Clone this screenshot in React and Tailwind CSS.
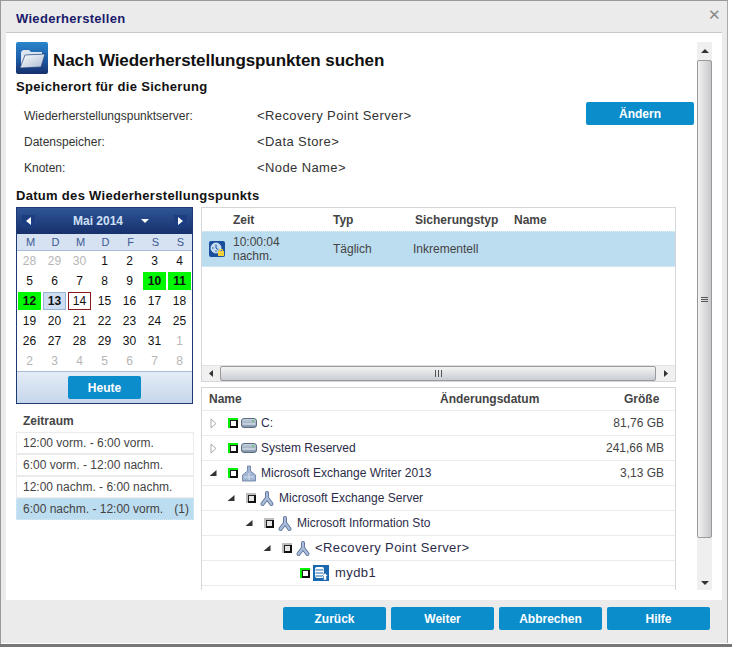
import React from 'react';

const DAYS = [
  [28, 29, 30, 1, 2, 3, 4],
  [5, 6, 7, 8, 9, 10, 11],
  [12, 13, 14, 15, 16, 17, 18],
  [19, 20, 21, 22, 23, 24, 25],
  [26, 27, 28, 29, 30, 31, 1],
  [2, 3, 4, 5, 6, 7, 8],
];

const FolderIcon = () => (
  <svg width="32" height="32" viewBox="0 0 32 32" className="shrink-0">
    <defs>
      <linearGradient id="folderBg" x1="0" y1="0" x2="0" y2="1">
        <stop offset="0" stopColor="#2a86cc" />
        <stop offset="0.55" stopColor="#1c5aa5" />
        <stop offset="1" stopColor="#162f6c" />
      </linearGradient>
      <linearGradient id="folderFront" x1="0" y1="0" x2="1" y2="1">
        <stop offset="0" stopColor="#ffffff" />
        <stop offset="1" stopColor="#a9bbd2" />
      </linearGradient>
    </defs>
    <rect width="32" height="32" rx="2" fill="url(#folderBg)" />
    <path d="M5 25 L5 10 L7 8 L13 8 L15 10 L26 10 L26 12 L9 13 Z" fill="#dbe6f2" />
    <path d="M4 26 L9 13 L29 12 L25 25 Z" fill="url(#folderFront)" stroke="#17336f" strokeWidth="0.6" />
  </svg>
);

const ClockLockIcon = () => (
  <svg width="16" height="16" viewBox="0 0 16 16" className="shrink-0">
    <rect width="16" height="16" rx="2" fill="#1a4f9c" />
    <circle cx="7" cy="7" r="5" fill="#bfd9f0" stroke="#e8f2fb" strokeWidth="0.8" />
    <path d="M7 3.5 V7 L9.5 9 M3 7 H4.5 M7 11 V9.5" stroke="#1a4f9c" fill="none" />
    <rect x="9" y="10" width="6" height="5" fill="#f2d13c" />
    <path d="M10.5 10 V8.5 H13.5 V10" stroke="#f2d13c" fill="none" />
  </svg>
);

const DriveIcon = () => (
  <svg width="16" height="10" viewBox="0 0 16 10" className="shrink-0">
    <defs>
      <linearGradient id="driveBody" x1="0" y1="0" x2="0" y2="1">
        <stop offset="0" stopColor="#c8d4e0" />
        <stop offset="1" stopColor="#7f93aa" />
      </linearGradient>
    </defs>
    <rect x="0.5" y="0.5" width="15" height="9" rx="2.5" fill="url(#driveBody)" stroke="#5d6d80" />
    <path d="M1.5 6 H14.5" stroke="#eef3f8" />
    <rect x="11" y="2.5" width="2" height="1" fill="#35c435" />
  </svg>
);

const NodeIcon = () => (
  <svg width="16" height="17" viewBox="0 0 16 17" className="shrink-0">
    <path d="M8 3 V8 L3.5 14 M8 8 L12.5 14" fill="none" stroke="#5f7399" strokeWidth="4" strokeLinecap="round" strokeLinejoin="round" />
    <path d="M8 3 V8 L3.5 14 M8 8 L12.5 14" fill="none" stroke="#a9bddb" strokeWidth="2.2" strokeLinecap="round" strokeLinejoin="round" />
  </svg>
);

const WriterIcon = () => (
  <svg width="16" height="17" viewBox="0 0 16 17" className="shrink-0">
    <path d="M6.5 1 H9.5 V6 L14.5 10 V16 H1.5 V10 L6.5 6 Z" fill="#a3b7d4" stroke="#62779e" strokeWidth="0.8" strokeLinejoin="round" />
    <path d="M3 12 H13 M8 8 V15" stroke="#dfe7f2" strokeWidth="0.8" />
  </svg>
);

const DbIcon = () => (
  <svg width="16" height="16" viewBox="0 0 16 16" className="shrink-0 mr-[2px]">
    <rect width="16" height="16" fill="#1a68b0" />
    <rect x="2" y="2" width="9" height="11" rx="2" fill="#fff" />
    <path d="M2.5 5 H10.5 M2.5 8 H10.5 M2.5 11 H9" stroke="#1a68b0" />
    <path d="M9 11 L12 8 L15 11 H13.5 V15 H10.5 V11 Z" fill="#fff" stroke="#1a68b0" strokeWidth="0.5" />
  </svg>
);

const Check = ({ on }) => (
  <svg width="10" height="10" viewBox="0 0 10 10" className="shrink-0">
    <rect width="10" height="10" fill={on ? '#00f000' : '#bdbdbd'} />
    <path d="M8 2 H10 V10 H2 V8 H8 Z" fill="#111" />
    <path d="M2 2 H8 V3 H3 V8 H2 Z" fill="#222" />
    <rect x="3" y="3" width="5" height="5" fill={on ? '#fff' : '#e6e6e6'} />
  </svg>
);

const Arrow = ({ open }) =>
  open ? (
    <svg width="8" height="8" viewBox="0 0 8 8" className="shrink-0"><path d="M7.5 1 V7 H0.5 Z" fill="#333" /></svg>
  ) : (
    <svg width="7" height="11" viewBox="0 0 7 11" className="shrink-0"><path d="M1 1 L6 5.5 L1 10 Z" fill="#fff" stroke="#aaa" /></svg>
  );

const TreeRow = ({ level, open, on, icon, text, size, mono }) => (
  <div className="h-[25px] flex items-center border-b border-[#ebebeb] text-[#2c2c4a]">
    <div className="w-[231px] shrink-0 flex items-center whitespace-nowrap" style={{ paddingLeft: 7 + level * 18 }}>
      <span className="w-[8px] shrink-0 flex justify-center">{open !== undefined && <Arrow open={open} />}</span>
      <span className="ml-[11px] mr-[3px] flex"><Check on={on} /></span>
      {icon}
      <span className={`ml-[4px] ${mono ? 'text-[13px] tracking-[0.4px]' : ''}`}>{text}</span>
    </div>
    <div className="flex-1 pr-[11px] text-right text-[#444]">{size}</div>
  </div>
);

const BlueButton = ({ children, className = '' }) => (
  <button className={`h-[23px] bg-[#0b8ccb] rounded-[2px] text-white font-bold text-[12px] ${className}`}>{children}</button>
);

const NavButton = ({ right }) => (
  <span className="w-[13px] h-[13px] bg-[#1c3d80] flex items-center justify-center">
    <svg width="5" height="8" viewBox="0 0 5 8">
      <path d={right ? 'M0 0 L5 4 L0 8 Z' : 'M5 0 L0 4 L5 8 Z'} fill="#fff" />
    </svg>
  </span>
);

function Calendar() {
  return (
    <div className="w-[177px] h-[197px] border border-[#1e3a75] flex flex-col">
      <div className="h-[26px] flex items-center px-[5px] bg-gradient-to-b from-[#2f5597] to-[#16306b] text-white">
        <NavButton />
        <span className="font-bold text-[#cfe0f5] ml-[38px] w-[62px]">Mai 2014</span>
        <svg width="8" height="4" viewBox="0 0 8 4" className="ml-[6px]"><path d="M0 0 H8 L4 4 Z" fill="#fff" /></svg>
        <span className="flex-1" />
        <NavButton right />
      </div>
      <div className="h-[17px] grid grid-cols-[repeat(7,25px)] bg-[#d6e2f1] border-b border-[#a8bddb] text-[11px] text-[#3d5a94] items-center text-center pl-[1px]">
        {['M', 'D', 'M', 'D', 'F', 'S', 'S'].map((d, i) => (
          <span key={i}>{d}</span>
        ))}
      </div>
      <div className="h-[120px] grid grid-cols-[repeat(7,25px)] grid-rows-6 text-center text-[#111]">
        {DAYS.flat().map((d, i) => {
          const muted = i < 3 || i > 33;
          const green = i === 12 || i === 13 || i === 14;
          let cls = 'mx-[1px] my-[1px] flex items-center justify-center ';
          if (muted) cls += 'text-[#b5b5b5] ';
          if (green) cls += 'bg-[#00f800] font-bold ';
          if (i === 15) cls += 'bg-[#cfddf0] border border-[#9ab4d8] font-bold ';
          if (i === 16) cls += 'border border-[#8b1a1a] ';
          return <span key={i} className={cls}>{d}</span>;
        })}
      </div>
      <div className="flex-1 border-t border-[#a8bddb] bg-gradient-to-b from-[#e4ecf6] to-[#c6d7ec] flex items-center justify-center">
        <BlueButton className="w-[73px]">Heute</BlueButton>
      </div>
    </div>
  );
}

const RANGES = ['12:00 vorm. - 6:00 vorm.', '6:00 vorm. - 12:00 nachm.', '12:00 nachm. - 6:00 nachm.'];

function Sidebar() {
  return (
    <div className="w-[178px] shrink-0">
      <Calendar />
      <div className="mt-[8px] pl-[7px] h-[20px] font-bold text-[#444]">Zeitraum</div>
      <div className="text-[#444]">
        {RANGES.map(r => (
          <div key={r} className="h-[22px] border border-[#ebebeb] pl-[6px] flex items-center">{r}</div>
        ))}
        <div className="h-[22px] bg-[#bcdcef] pl-[6px] pr-[4px] flex items-center justify-between border border-dotted border-[#d9e9f3]">
          <span>6:00 nachm. - 12:00 vorm.</span><span>(1)</span>
        </div>
      </div>
    </div>
  );
}

function PointsGrid() {
  return (
    <div className="h-[175px] border border-[#d4d6dc] flex flex-col text-[#444]">
      <div className="h-[23px] flex items-center font-bold pl-[31px]">
        <span className="w-[100px]">Zeit</span>
        <span className="w-[82px]">Typ</span>
        <span className="w-[99px]">Sicherungstyp</span>
        <span>Name</span>
      </div>
      <div className="h-[36px] bg-[#bcdcef] flex items-center pl-[7px] border-y border-dotted border-[#e4eff6]">
        <ClockLockIcon />
        <span className="w-[100px] ml-[8px] leading-[14px]">10:00:04<br />nachm.</span>
        <span className="w-[80px]">Täglich</span>
        <span>Inkrementell</span>
      </div>
      <div className="flex-1" />
      <div className="h-[16px] flex items-center bg-[#f0f0f0] border-t border-[#e2e2e2]">
        <span className="w-[18px] flex justify-center">
          <svg width="4" height="7" viewBox="0 0 4 7"><path d="M4 0 L0 3.5 L4 7 Z" fill="#333" /></svg>
        </span>
        <div className="w-[436px] h-[15px] border border-[#9a9a9a] rounded-[2px] bg-gradient-to-b from-[#f4f4f4] to-[#c8ccd2] flex items-center justify-center gap-[1px]">
          <span className="w-[1px] h-[7px] bg-[#555]" />
          <span className="w-[1px] h-[7px] bg-[#555] ml-[1px]" />
          <span className="w-[1px] h-[7px] bg-[#555] ml-[1px]" />
        </div>
        <span className="flex-1 flex justify-center">
          <svg width="4" height="7" viewBox="0 0 4 7"><path d="M0 0 L4 3.5 L0 7 Z" fill="#333" /></svg>
        </span>
      </div>
    </div>
  );
}

function FilesGrid() {
  return (
    <div className="mt-[5px] h-[203px] border-x border-t border-[#d4d6dc] overflow-hidden">
      <div className="h-[23px] flex items-center font-bold text-[#444] border-b border-[#ebebeb]">
        <span className="w-[238px] pl-[7px]">Name</span>
        <span className="w-[184px]">Änderungsdatum</span>
        <span>Größe</span>
      </div>
      <TreeRow open={false} on icon={<DriveIcon />} level={0} text="C:" size="81,76 GB" />
      <TreeRow open={false} on icon={<DriveIcon />} level={0} text="System Reserved" size="241,66 MB" />
      <TreeRow open on icon={<WriterIcon />} level={0} text="Microsoft Exchange Writer 2013" size="3,13 GB" />
      <TreeRow open icon={<NodeIcon />} level={1} text="Microsoft Exchange Server" />
      <TreeRow open icon={<NodeIcon />} level={2} text="Microsoft Information Sto" />
      <TreeRow open icon={<NodeIcon />} level={3} mono text="<Recovery Point Server>" />
      <TreeRow on icon={<DbIcon />} level={4} mono text="mydb1" />
    </div>
  );
}

const InfoRow = ({ label, value }) => (
  <div className="h-[26px] flex items-center">
    <span className="w-[233px] text-[#333]">{label}</span>
    <span className="text-[13px] tracking-[0.4px] text-[#333]">{value}</span>
  </div>
);

function Scrollbar() {
  return (
    <div className="w-[15px] h-[548px] mt-[9px] ml-[3px] bg-[#efefef] flex flex-col items-center shrink-0">
      <div className="h-[18px] flex items-center justify-center">
        <svg width="8" height="4" viewBox="0 0 8 4"><path d="M4 0 L8 4 H0 Z" fill="#333" /></svg>
      </div>
      <div className="w-[15px] h-[478px] border border-[#9a9a9a] rounded-[2px] bg-gradient-to-r from-[#f2f2f2] to-[#c8c8cc] flex flex-col items-center justify-center gap-[1px]">
        <span className="w-[7px] h-[1px] bg-[#555]" />
        <span className="w-[7px] h-[1px] bg-[#555]" />
        <span className="w-[7px] h-[1px] bg-[#555]" />
      </div>
      <div className="flex-1 w-full flex items-end justify-center pb-[5px]">
        <svg width="8" height="4" viewBox="0 0 8 4"><path d="M0 0 H8 L4 4 Z" fill="#333" /></svg>
      </div>
    </div>
  );
}

export default function App() {
  return (
    <div className="w-[732px] h-[647px] bg-[#777] overflow-hidden text-[12px] font-['Liberation_Sans',Arial,sans-serif]">
      <div className="h-[644px] bg-white border-l border-[#999]">
        <div className="w-[727px] h-[643px] pt-[1px] bg-[#ebebeb] border-t border-r border-t-[#999] border-r-[#aaa] relative">
          <div className="h-[30px] pl-[15px] pt-[4px] flex items-center text-[13px] tracking-[0.3px] font-bold text-[#1b1b6b]">Wiederherstellen</div>
          <button className="absolute top-[6px] right-[6px] text-[#888] text-[15px] leading-none">✕</button>
          <div className="ml-[5px] w-[716px] h-[568px] bg-white border-t border-[#c8c8c8] flex pl-[10px]">
            <div className="w-[678px] shrink-0">
              <div className="mt-[9px] flex items-center h-[32px]">
                <FolderIcon />
                <h1 className="ml-[5px] pt-[6px] text-[17px] tracking-[-0.08px] font-bold text-[#111]">Nach Wiederherstellungspunkten suchen</h1>
              </div>
              <div className="relative">
                <h2 className="mt-[3px] h-[17px] text-[13px] font-bold text-[#111] tracking-[0.3px]">Speicherort für die Sicherung</h2>
                <div className="mt-[9px] pl-[8px]">
                  <InfoRow label="Wiederherstellungspunktserver:" value="<Recovery Point Server>" />
                  <InfoRow label="Datenspeicher:" value="<Data Store>" />
                  <InfoRow label="Knoten:" value="<Node Name>" />
                </div>
                <BlueButton className="absolute top-[25px] right-0 w-[108px]">Ändern</BlueButton>
              </div>
              <h2 className="mt-[5px] h-[21px] text-[13px] font-bold text-[#111] tracking-[0.3px]">Datum des Wiederherstellungspunkts</h2>
              <div className="flex">
                <Sidebar />
                <div className="ml-[7px] w-[475px]">
                  <PointsGrid />
                  <FilesGrid />
                </div>
              </div>
            </div>
            <Scrollbar />
          </div>
          <div className="pt-[7px] flex justify-end gap-[5px] pr-[17px]">
            {['Zurück', 'Weiter', 'Abbrechen', 'Hilfe'].map(b => (
              <BlueButton key={b} className="w-[103px]">{b}</BlueButton>
            ))}
          </div>
        </div>
      </div>
    </div>
  );
}
